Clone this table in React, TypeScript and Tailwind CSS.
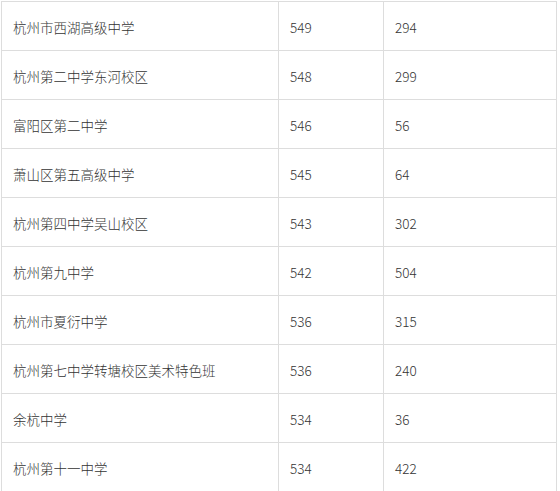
import React from 'react'

const rows = [
  ['杭州市西湖高级中学', '549', '294'],
  ['杭州第二中学东河校区', '548', '299'],
  ['富阳区第二中学', '546', '56'],
  ['萧山区第五高级中学', '545', '64'],
  ['杭州第四中学吴山校区', '543', '302'],
  ['杭州第九中学', '542', '504'],
  ['杭州市夏衍中学', '536', '315'],
  ['杭州第七中学转塘校区美术特色班', '536', '240'],
  ['余杭中学', '534', '36'],
  ['杭州第十一中学', '534', '422'],
]

export default function App() {
  return (
    <div className="min-h-screen bg-white pt-px pl-px">
      <table
        className="table-fixed border-collapse w-[556px] text-[13.5px] font-light text-[#333]"
        style={{ fontFamily: '"Microsoft YaHei", "Noto Sans CJK SC", "Noto Sans", sans-serif' }}
      >
        <colgroup>
          <col className="w-[277px]" />
          <col className="w-[105px]" />
          <col className="w-[173px]" />
        </colgroup>
        <tbody>
          {rows.map((r) => (
            <tr key={r[0]} className="h-[49px]">
              {r.map((c, i) => (
                <td key={i} className="border border-[#ddd] pl-[11px] pt-[2px] align-middle whitespace-nowrap">
                  {c}
                </td>
              ))}
            </tr>
          ))}
        </tbody>
      </table>
    </div>
  )
}
